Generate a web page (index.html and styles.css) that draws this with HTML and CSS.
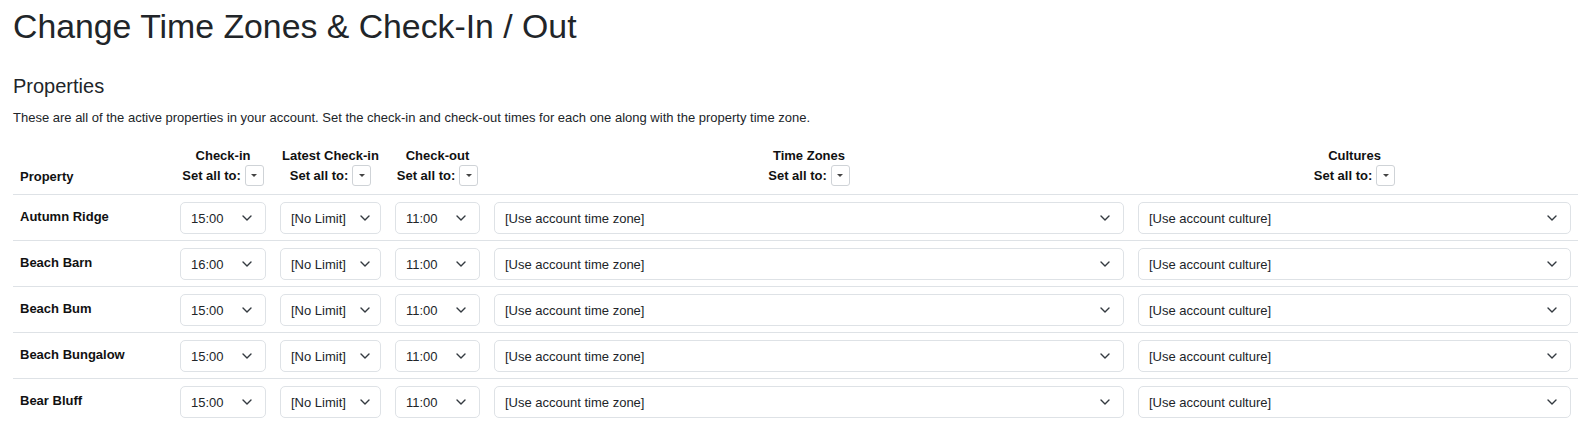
FILE: index.html
```html
<!DOCTYPE html>
<html lang="en">
<head>
<meta charset="utf-8">
<title>Change Time Zones &amp; Check-In / Out</title>
<link rel="stylesheet" href="styles.css">
</head>
<body>
<div class="page">
  <h1 class="title">Change Time Zones &amp; Check-In / Out</h1>
  <h3 class="subtitle">Properties</h3>
  <p class="intro">These are all of the active properties in your account. Set the check-in and check-out times for each one along with the property time zone.</p>

  <table class="grid">
    <colgroup>
      <col class="c-name"><col class="c-in"><col class="c-latest"><col class="c-out"><col class="c-tz"><col class="c-cult">
    </colgroup>
    <thead>
      <tr>
        <th class="h-name">Property</th>
        <th><div>Check-in</div><div class="setall">Set all to: <span class="caret-btn"><span class="caret"></span></span></div></th>
        <th><div>Latest Check-in</div><div class="setall">Set all to: <span class="caret-btn"><span class="caret"></span></span></div></th>
        <th><div>Check-out</div><div class="setall">Set all to: <span class="caret-btn"><span class="caret"></span></span></div></th>
        <th><div>Time Zones</div><div class="setall">Set all to: <span class="caret-btn"><span class="caret"></span></span></div></th>
        <th><div>Cultures</div><div class="setall">Set all to: <span class="caret-btn"><span class="caret"></span></span></div></th>
      </tr>
    </thead>
    <tbody>
      <tr>
        <td class="name">Autumn Ridge</td>
        <td><div class="sel"><span>15:00</span><svg class="chev" viewBox="0 0 10 6"><path d="M1 1l4 4 4-4"/></svg></div></td>
        <td><div class="sel sel-latest"><span>[No Limit]</span><svg class="chev" viewBox="0 0 10 6"><path d="M1 1l4 4 4-4"/></svg></div></td>
        <td><div class="sel"><span>11:00</span><svg class="chev" viewBox="0 0 10 6"><path d="M1 1l4 4 4-4"/></svg></div></td>
        <td><div class="sel"><span>[Use account time zone]</span><svg class="chev" viewBox="0 0 10 6"><path d="M1 1l4 4 4-4"/></svg></div></td>
        <td><div class="sel"><span>[Use account culture]</span><svg class="chev" viewBox="0 0 10 6"><path d="M1 1l4 4 4-4"/></svg></div></td>
      </tr>
      <tr>
        <td class="name">Beach Barn</td>
        <td><div class="sel"><span>16:00</span><svg class="chev" viewBox="0 0 10 6"><path d="M1 1l4 4 4-4"/></svg></div></td>
        <td><div class="sel sel-latest"><span>[No Limit]</span><svg class="chev" viewBox="0 0 10 6"><path d="M1 1l4 4 4-4"/></svg></div></td>
        <td><div class="sel"><span>11:00</span><svg class="chev" viewBox="0 0 10 6"><path d="M1 1l4 4 4-4"/></svg></div></td>
        <td><div class="sel"><span>[Use account time zone]</span><svg class="chev" viewBox="0 0 10 6"><path d="M1 1l4 4 4-4"/></svg></div></td>
        <td><div class="sel"><span>[Use account culture]</span><svg class="chev" viewBox="0 0 10 6"><path d="M1 1l4 4 4-4"/></svg></div></td>
      </tr>
      <tr>
        <td class="name">Beach Bum</td>
        <td><div class="sel"><span>15:00</span><svg class="chev" viewBox="0 0 10 6"><path d="M1 1l4 4 4-4"/></svg></div></td>
        <td><div class="sel sel-latest"><span>[No Limit]</span><svg class="chev" viewBox="0 0 10 6"><path d="M1 1l4 4 4-4"/></svg></div></td>
        <td><div class="sel"><span>11:00</span><svg class="chev" viewBox="0 0 10 6"><path d="M1 1l4 4 4-4"/></svg></div></td>
        <td><div class="sel"><span>[Use account time zone]</span><svg class="chev" viewBox="0 0 10 6"><path d="M1 1l4 4 4-4"/></svg></div></td>
        <td><div class="sel"><span>[Use account culture]</span><svg class="chev" viewBox="0 0 10 6"><path d="M1 1l4 4 4-4"/></svg></div></td>
      </tr>
      <tr>
        <td class="name">Beach Bungalow</td>
        <td><div class="sel"><span>15:00</span><svg class="chev" viewBox="0 0 10 6"><path d="M1 1l4 4 4-4"/></svg></div></td>
        <td><div class="sel sel-latest"><span>[No Limit]</span><svg class="chev" viewBox="0 0 10 6"><path d="M1 1l4 4 4-4"/></svg></div></td>
        <td><div class="sel"><span>11:00</span><svg class="chev" viewBox="0 0 10 6"><path d="M1 1l4 4 4-4"/></svg></div></td>
        <td><div class="sel"><span>[Use account time zone]</span><svg class="chev" viewBox="0 0 10 6"><path d="M1 1l4 4 4-4"/></svg></div></td>
        <td><div class="sel"><span>[Use account culture]</span><svg class="chev" viewBox="0 0 10 6"><path d="M1 1l4 4 4-4"/></svg></div></td>
      </tr>
      <tr>
        <td class="name">Bear Bluff</td>
        <td><div class="sel"><span>15:00</span><svg class="chev" viewBox="0 0 10 6"><path d="M1 1l4 4 4-4"/></svg></div></td>
        <td><div class="sel sel-latest"><span>[No Limit]</span><svg class="chev" viewBox="0 0 10 6"><path d="M1 1l4 4 4-4"/></svg></div></td>
        <td><div class="sel"><span>11:00</span><svg class="chev" viewBox="0 0 10 6"><path d="M1 1l4 4 4-4"/></svg></div></td>
        <td><div class="sel"><span>[Use account time zone]</span><svg class="chev" viewBox="0 0 10 6"><path d="M1 1l4 4 4-4"/></svg></div></td>
        <td><div class="sel"><span>[Use account culture]</span><svg class="chev" viewBox="0 0 10 6"><path d="M1 1l4 4 4-4"/></svg></div></td>
      </tr>
    </tbody>
  </table>
</div>
</body>
</html>
```

FILE: styles.css
```css
html, body {
  margin: 0;
  padding: 0;
  background: #fff;
}
body {
  font-family: "Liberation Sans", Arial, sans-serif;
  color: #212529;
  font-size: 13px;
}
.page {
  padding: 0 1px 0 13px;
}
.title {
  font-size: 33.8px;
  font-weight: 400;
  line-height: 1.1;
  margin: 8px 0 0;
  color: #212529;
}
.subtitle {
  font-size: 20px;
  font-weight: 400;
  line-height: 1.1;
  margin: 30px 0 0;
  color: #212529;
}
.intro {
  font-size: 13px;
  margin: 12px 0 0;
  line-height: 1.4;
}
.grid {
  width: 100%;
  border-collapse: collapse;
  margin-top: 19px;
  table-layout: fixed;
}
.c-name { width: 160px; }
.c-in { width: 100px; }
.c-latest { width: 115px; }
.c-out { width: 99px; }
.c-tz { width: 644px; }
.grid th {
  font-weight: 700;
  color: #111;
  text-align: center;
  vertical-align: bottom;
  padding: 0 7px 8px;
  line-height: 19px;
  border-bottom: 1px solid #dee2e6;
}
.grid th.h-name {
  text-align: left;
  padding-bottom: 8px;
}
.setall {
  display: flex;
  align-items: center;
  justify-content: center;
  gap: 4px;
}
.caret-btn {
  display: inline-flex;
  align-items: center;
  justify-content: center;
  width: 17px;
  height: 19px;
  border: 1px solid #cfd3d7;
  border-radius: 3px;
  background: #fff;
}
.caret {
  width: 0;
  height: 0;
  border-left: 3px solid transparent;
  border-right: 3px solid transparent;
  border-top: 3px solid #444;
}
.grid td {
  padding: 7px 7px 6px;
  border-bottom: 1px solid #dee2e6;
  vertical-align: middle;
}
.grid td.name {
  font-weight: 700;
  color: #111;
  vertical-align: top;
  padding-top: 14px;
}
.grid tbody tr:last-child td {
  border-bottom: none;
}
.sel {
  display: flex;
  align-items: center;
  justify-content: space-between;
  height: 32px;
  box-sizing: border-box;
  border: 1px solid #dee2e6;
  border-radius: 5px;
  padding: 0 13px 0 10px;
  background: #fff;
  color: #212529;
  white-space: nowrap;
}
.sel-latest {
  padding-right: 10px;
}
.chev {
  width: 10px;
  height: 6px;
  flex: none;
}
.chev path {
  fill: none;
  stroke: #343a40;
  stroke-width: 1.4;
  stroke-linecap: round;
  stroke-linejoin: round;
}
```
